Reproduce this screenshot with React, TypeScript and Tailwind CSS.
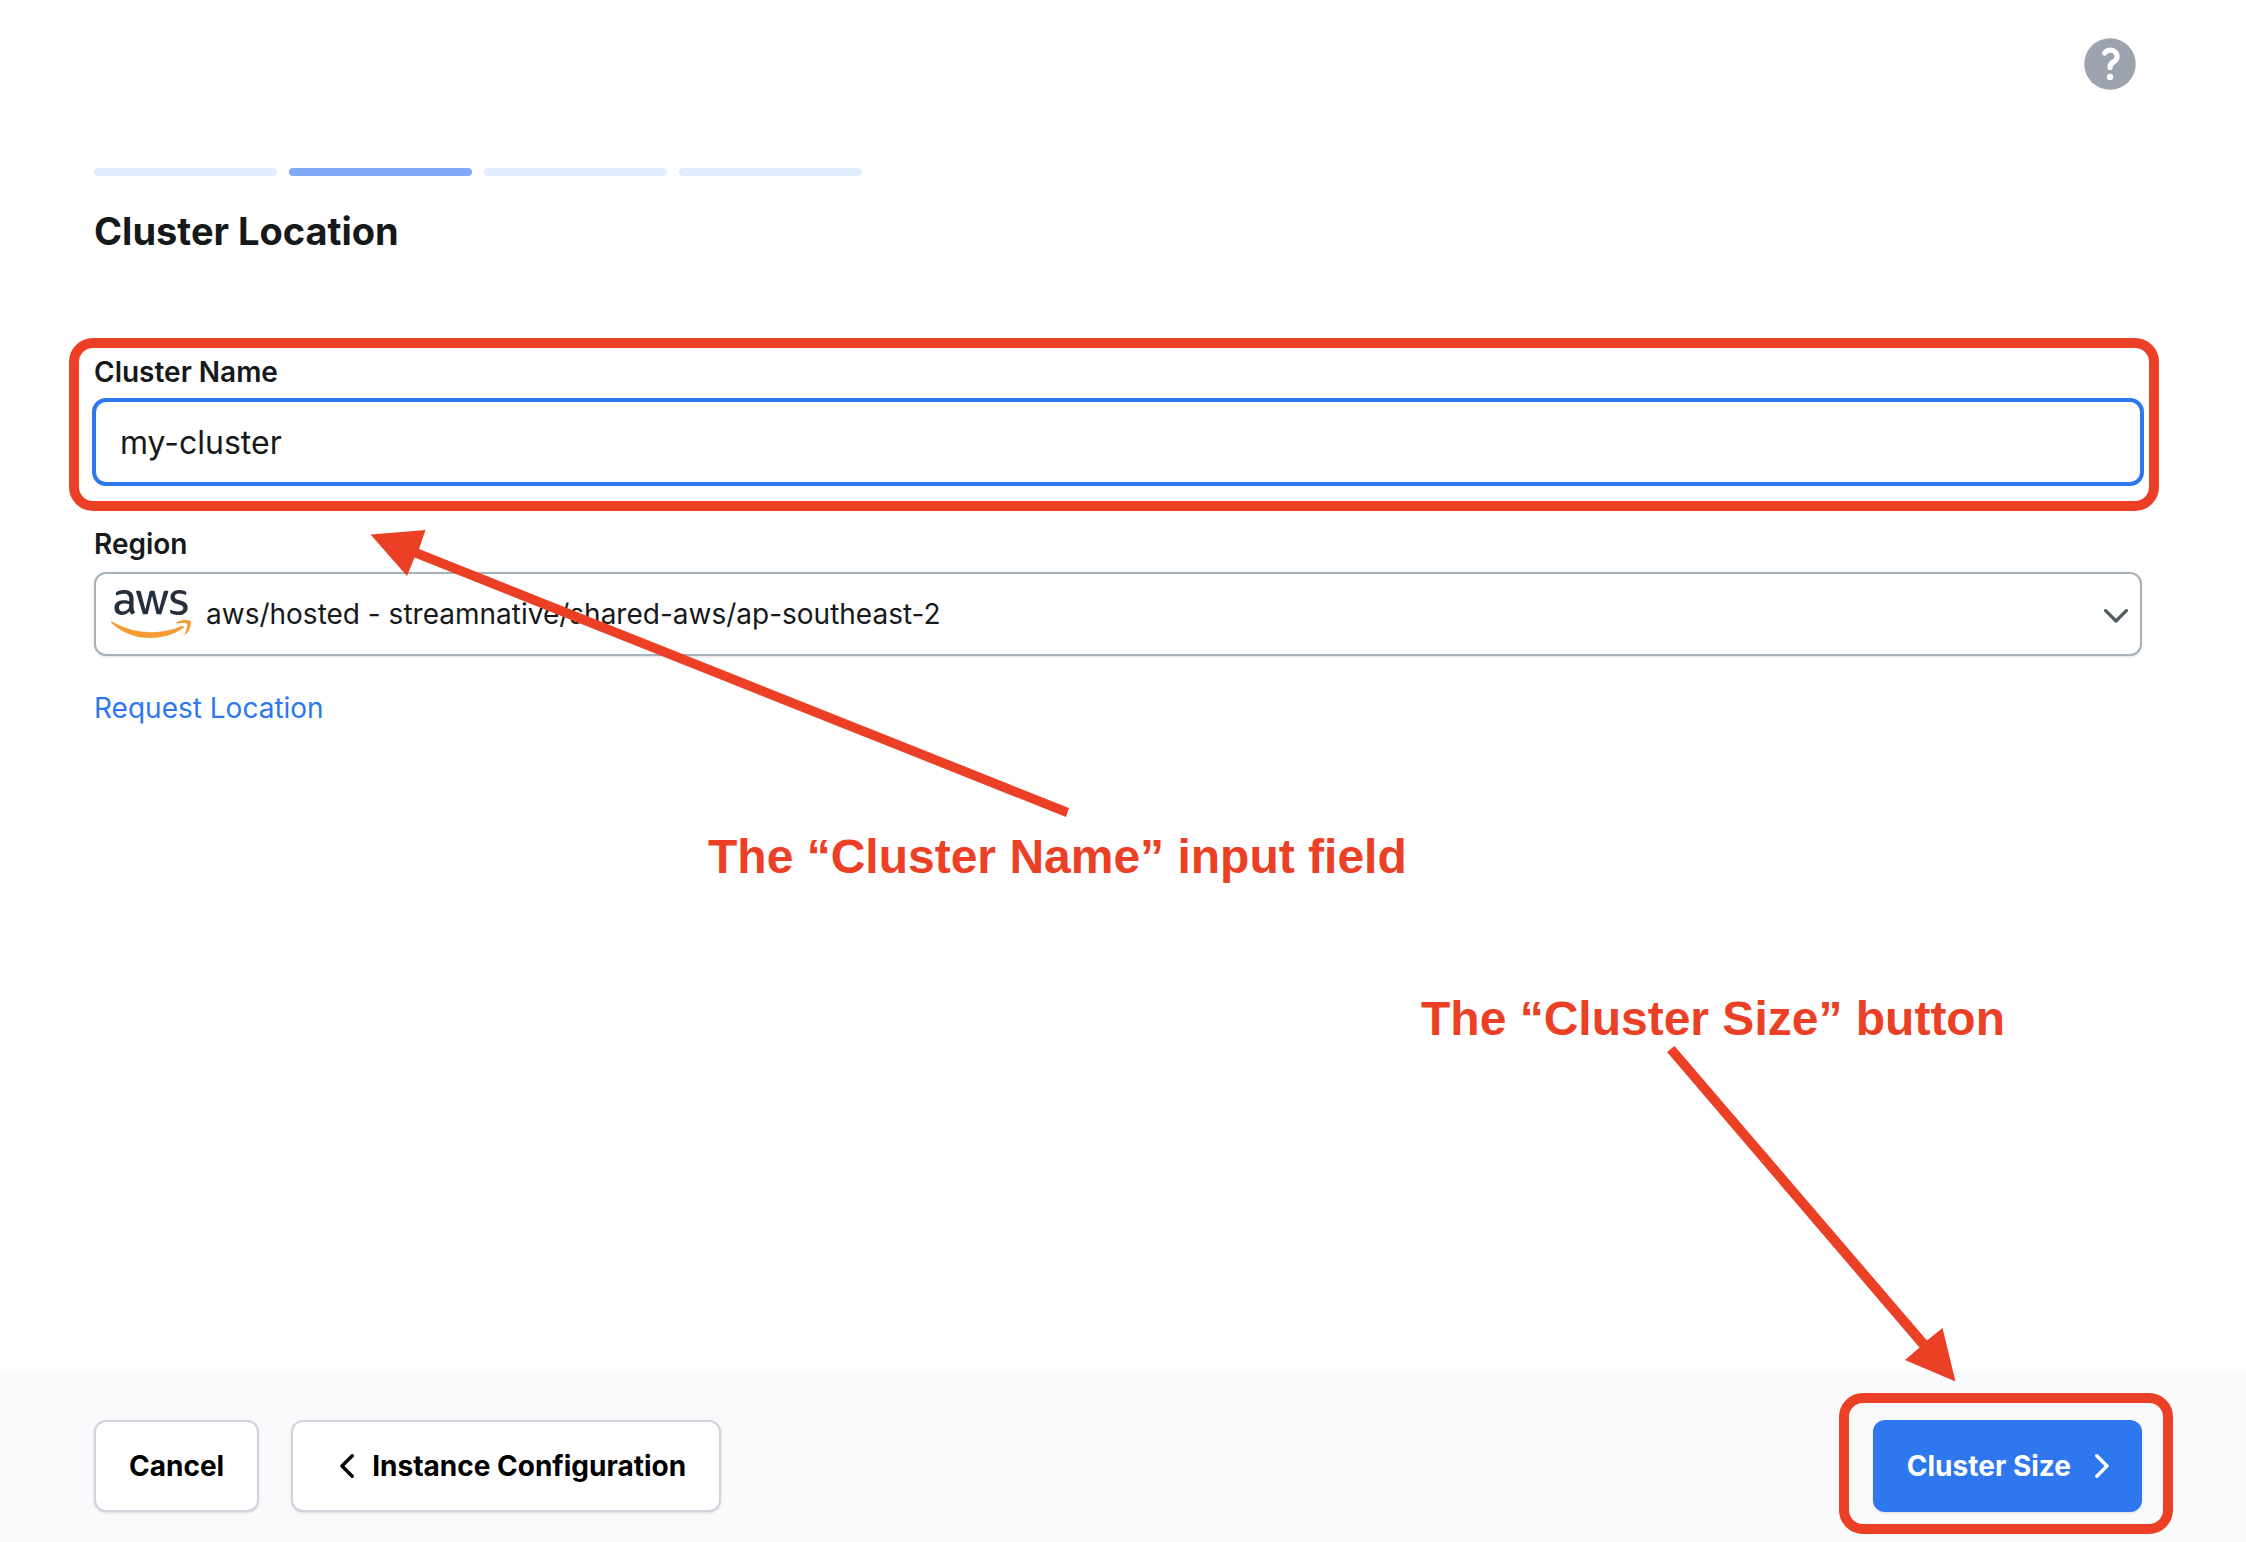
import { useState } from "react";
import type { ReactNode } from "react";
import { FaAws } from "react-icons/fa";

const STEPS = ["Instance", "Location", "Size", "Review"];
const CURRENT_STEP = 1;

function HelpIcon() {
  return (
    <svg viewBox="0 0 52 52" className="size-[52px]" fill="none" aria-hidden="true">
      <circle cx="26" cy="26" r="25.8" fill="#9ca3af" />
      <path
        d="M20.7 15 C23 11.6 28.4 11.2 31.2 14 C34 17 33.4 21.4 30.4 23.4 C27.6 24.8 26 26.2 26 29.4"
        stroke="#fff"
        strokeWidth="5.2"
        strokeLinecap="round"
        strokeLinejoin="round"
      />
      <circle cx="26" cy="39" r="3.2" fill="#fff" />
    </svg>
  );
}

function Chevron({ direction }: { direction: "left" | "right" }) {
  return (
    <svg viewBox="0 0 14 24" className="h-6 w-[14px]" fill="none" aria-hidden="true">
      <path
        d={direction === "left" ? "M12.2 1.8 L2 12 L12.2 22.2" : "M1.8 1.8 L12 12 L1.8 22.2"}
        stroke="currentColor"
        strokeWidth="3.4"
        strokeLinecap="round"
        strokeLinejoin="round"
      />
    </svg>
  );
}

function AwsLogo() {
  return (
    <span className="relative block h-16 w-20" aria-hidden="true">
      <FaAws className="absolute inset-0 h-16 w-20 text-[#252f3e] [clip-path:inset(0_0_28px_0)]" />
      <FaAws className="absolute inset-0 h-16 w-20 text-[#f79c34] [clip-path:inset(36px_0_0_0)]" />
    </span>
  );
}

function Highlight({ className }: { className: string }) {
  return (
    <div
      className={`pointer-events-none absolute rounded-[24px] border-[10px] border-[#eb4025] ${className}`}
    />
  );
}

function Callout({ className, children }: { className: string; children: ReactNode }) {
  return (
    <p
      className={`pointer-events-none absolute whitespace-nowrap font-['Liberation_Sans',Arial,sans-serif] text-[48px] leading-[56px] font-bold text-[#eb4025] ${className}`}
    >
      {children}
    </p>
  );
}

export default function App() {
  const [name, setName] = useState("my-cluster");

  return (
    <div className="relative flex min-h-screen flex-col overflow-hidden bg-white font-[Inter,sans-serif] text-[28px] leading-10 text-[#16191a]">
      <header className="flex justify-end pt-[38px] pr-[110px]">
        <button type="button" aria-label="Help">
          <HelpIcon />
        </button>
      </header>

      <main className="flex flex-1 flex-col pt-[78px] pr-[104px] pb-12 pl-[94px]">
        <ol className="flex max-w-3xl gap-3" aria-label="Progress">
          {STEPS.map((step, i) => (
            <li
              key={step}
              aria-label={step}
              className={`h-2 flex-1 rounded-full ${i === CURRENT_STEP ? "bg-[#82aaf7]" : "bg-[#e1eefe]"}`}
            />
          ))}
        </ol>

        <h1 className="mt-[31px] text-[38px] leading-12 font-bold">Cluster Location</h1>

        <div className="relative mt-[97px]">
          <label htmlFor="cluster-name" className="block font-semibold">
            Cluster Name
          </label>
          <div className="-mx-0.5 mt-1.5">
            <input
              id="cluster-name"
              type="text"
              value={name}
              onChange={(e) => setName(e.target.value)}
              className="block h-[88px] w-full rounded-[14px] border-4 border-[#2e77ee] bg-white px-6 text-[32px] outline-none"
            />
          </div>
          <Highlight className="-top-[14px] -right-[17px] -bottom-[25px] -left-[25px]" />
        </div>

        <div className="mt-[38px]">
          <label htmlFor="region" className="block font-semibold">
            Region
          </label>
          <div className="relative mt-2">
            <select
              id="region"
              className="block h-[84px] w-full appearance-none rounded-xl border-2 border-[#a5b2bb] bg-white pr-16 pl-[110px] shadow-sm outline-none"
            >
              <option>aws/hosted - streamnative/shared-aws/ap-southeast-2</option>
            </select>
            <div className="pointer-events-none absolute top-[10px] left-[17px]">
              <AwsLogo />
            </div>
            <svg
              viewBox="0 0 24 14"
              className="pointer-events-none absolute top-[37px] right-[14px] h-[14px] w-6"
              fill="none"
              aria-hidden="true"
            >
              <path
                d="M1.6 1.6 L12 12 L22.4 1.6"
                stroke="#4f5a60"
                strokeWidth="3.2"
                strokeLinecap="round"
                strokeLinejoin="round"
              />
            </svg>
          </div>
        </div>

        <a href="#request-location" className="mt-8 self-start text-[#2e77ee]">
          Request Location
        </a>
      </main>

      <footer className="flex items-center justify-between bg-[#f9fafc] pt-12 pr-[104px] pb-[30px] pl-[94px] font-bold">
        <div className="flex gap-8 text-black">
          <button
            type="button"
            className="h-[92px] rounded-xl border-2 border-[#d1d5db] bg-white px-[33px] shadow-sm"
          >
            Cancel
          </button>
          <button
            type="button"
            className="flex h-[92px] items-center gap-[18px] rounded-xl border-2 border-[#d1d5db] bg-white pr-[33px] pl-[47px] shadow-sm"
          >
            <Chevron direction="left" />
            Instance Configuration
          </button>
        </div>
        <div className="relative">
          <button
            type="button"
            className="flex h-[92px] items-center gap-6 rounded-xl bg-[#2e77ee] pr-[33px] pl-[34px] text-white shadow-sm"
          >
            Cluster Size
            <Chevron direction="right" />
          </button>
          <Highlight className="-top-[27px] -right-[31px] -bottom-[22px] -left-[34px]" />
        </div>
      </footer>

      <svg
        viewBox="0 0 700 290"
        className="pointer-events-none absolute top-[529px] left-[370px] h-[290px] w-[700px]"
        fill="#eb4025"
        aria-hidden="true"
      >
        <path d="M0.5 5.5 L55.5 1 L49 20 L699 279 L696 288 L44.5 28.5 L37 47 Z" />
      </svg>
      <Callout className="top-[829px] left-[708px]">The “Cluster Name” input field</Callout>

      <svg
        viewBox="0 0 290 337"
        className="pointer-events-none absolute top-[1045px] right-[290px] h-[337px] w-[290px]"
        fill="#eb4025"
        aria-hidden="true"
      >
        <path d="M8.5 1 L261 295.5 L276.5 283 L289.5 336.5 L239 315 L253.5 302.5 L1 7 Z" />
      </svg>
      <Callout className="top-[991px] right-[241px]">The “Cluster Size” button</Callout>
    </div>
  );
}
